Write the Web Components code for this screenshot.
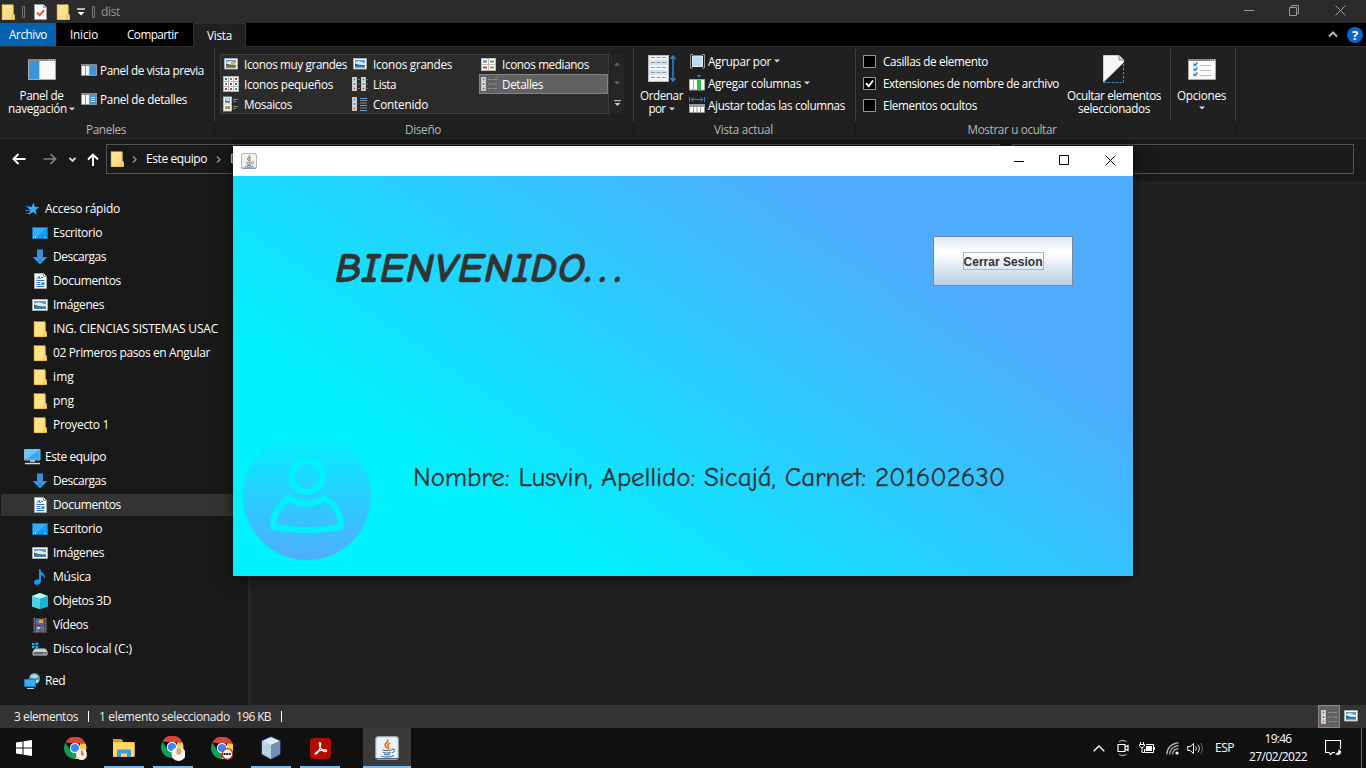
<!DOCTYPE html>
<html lang="es">
<head>
<meta charset="utf-8">
<title>dist</title>
<style>
html,body{margin:0;height:100%;overflow:hidden;background:#101010}
body{font:11.7px/16px "Open Sans","Noto Sans",sans-serif;color:#fff}
</style>
</head>
<body>
<desktop-screen></desktop-screen>
<script>
const folder='<g transform="translate(1)"><path d="M1 .5h9.500l2 1V10l1 .8v4.700H1z" fill="#ffe18b"/><path d="M1.300.5v15M1 15.500h12" stroke="#f0c346" fill="none"/><path d="M10.800 15.500v-4.500l1-1.500v-9h-1" fill="none" stroke="#eec95c" stroke-width=".8"/><path d="M11.300 15.500v-4.500h2.200v4.500z" fill="#ffe18b" stroke="#e8b839" stroke-width=".8"/></g>';
const scene=(x,y,w,h)=>`<g transform="translate(${x} ${y}) scale(${w/10} ${h/7})"><path fill="#4f9be8" d="M0 0h10v7H0z"/><path fill="#dceefa" d="M0 2l4-1 6 2v2H0z"/><path fill="#2b6b55" d="M0 3l4 1.500 6 .3V6H0z"/><path fill="#3c80b8" d="M0 5.500h10V7H0z"/></g>`;
const java='<rect x=".7" y=".7" width="22.600" height="22.600" rx="2.500" fill="#f0f3f6" stroke="#8fa5b8" stroke-width="1.200"/><path d="M1 22.500h22" stroke="#496b86"/><path d="M12.500 3.500c2 2-3.500 4-2.500 6 .4 1.200 2 1.400 1.500 3M15 7c-3 1.300-3 2.300-1.500 3.700.8 1-.3 1.800-1 2.300" fill="none" stroke="#e76f00" stroke-width="1.600"/><path d="M7.500 13.800c2 1.200 7 1.200 9 0M8 16.200c2 1.100 6 1.100 8 0M9 18.300c2 .8 4 .8 6 0M6 20c3 1.500 9 1.500 13-.3M16.800 13.300c4-.8 3 2.700 0 3.700" fill="none" stroke="#5382a1" stroke-width="1.300"/>';
const chrome='<path fill="#db4437" d="M1.500 5.500A11 11 0 0 1 21.500 6.500H11z"/><path fill="#ffcd40" d="M21.500 6.500A11 11 0 0 1 10.500 22L16 13V6.500z"/><path fill="#0f9d58" d="M1.500 5.500A11 11 0 0 0 10.500 22l4.500-7.500L6 13z"/><circle cx="11" cy="11" r="5.200" fill="#fff"/><circle cx="11" cy="11" r="4.100" fill="#4285f4"/>';
const mini=(x,y,w,h,c)=>`<path d="M${x} ${y}h${w}v${h}h-${w}z" fill="#fff"/><path d="M${x+w/2-1} ${y+h/2-1}h2v2h-2z" fill="${c}"/>`;
const col=(x)=>`<path d="M${x} 1h5v14h-5z" fill="#b5b5b5"/>`+mini(x+.7,1.7,3.6,3.5,'#3b8080')+mini(x+.7,6.2,3.6,3.5,'#3678c0')+mini(x+.7,10.700,3.6,3.5,'#d33b28');
const det=col(0)+'<path d="M7 3.500h4m1 0h4M7 8h4m1 0h4M7 12.500h4m1 0h4" stroke="#8b8b8b"/>';
const I={
folder:[16,16,folder],
grip:[3,12,'<path d="M.5.500h2v11h-2z" fill="none" stroke="#7a7a7a" stroke-width=".9"/>'],
check:[13,16,'<path d="M.5.500h9l3 3v12H.5z" fill="#fafafa" stroke="#999"/><path d="M9.500.500v3h3" fill="#ddd" stroke="#999"/><path d="M3 8.500l2.700 2.700 4.500-5" fill="none" stroke="#e8501e" stroke-width="1.800"/>'],
qat:[8,8,'<path d="M0 1h8" stroke="#fff" stroke-width="1.300"/><path d="M.5 4h7L4 7.500z" fill="#fff"/>'],
caret:[6,4,'<path d="M0 .5h6L3 3.500z" fill="#d8d8d8"/>'],
min:[10,10,'<path d="M0 5.500h10" stroke="currentColor"/>'],
max:[11,11,'<path d="M.5.500h9v9h-9z" fill="none" stroke="currentColor"/>'],
restore:[11,11,'<path d="M.5 2.500h7v8h-7zM2.500 2.500v-2h7v8h-2" fill="none" stroke="currentColor"/>'],
close:[11,11,'<path d="M.5.500l10 10M10.500.500l-10 10" fill="none" stroke="currentColor"/>'],
chevup:[10,7,'<path d="M1 5.500l4-4 4 4" fill="none" stroke="#b5b5b5" stroke-width="2"/>'],
navpane:[28,21,'<path d="M.5.500h27v20H.5z" fill="#f8f8f8" stroke="#aaa"/><path d="M0 0h28v2H0z" fill="#888"/><path d="M21 1h1m1 0h1m1 0h1" stroke="#ddd"/><path d="M1 2h10v18H1z" fill="#3a94de"/><path d="M11.500 2v18" stroke="#ccc"/>'],
prev:[16,12,'<path d="M.5.500h15v11H.5z" fill="#f6f6f6" stroke="#999"/><path d="M0 0h16v2H0z" fill="#888"/><path d="M9 2h6v9H9z" fill="#3a94de"/><path d="M4.500 2v9M8.500 2v9" stroke="#999"/>'],
detp:[16,12,'<path d="M.5.500h15v11H.5z" fill="#f6f6f6" stroke="#999"/><path d="M0 0h16v2H0z" fill="#888"/><path d="M9 2h6v9H9z" fill="#3a94de"/><path d="M4.500 2v9M8.500 2v9" stroke="#999"/><path d="M10 4.500h4m-4 2h4m-4 2h4" stroke="#cfe6fa"/>'],
xl:[14,12,'<path d="M.5.500h13v10.500H.5z" fill="#fff" stroke="#aaa"/>'+scene(2,2,10,7.500)+'<path d="M7 3.500h4v4H7z" fill="#e8b421"/><path d="M3 6.500h3v3H3z" fill="#d5442e"/><path d="M7 7h3v2.500H7z" fill="#2f8c30"/>'],
lg:[14,12,'<path d="M.5.500h13v10.500H.5z" fill="#fff" stroke="#aaa"/>'+scene(2,2,10,7.500)],
md:[16,13,'<path d="M0 0h15v13H0z" fill="#bbb"/><path d="M1 1h6v5H1zM8 1h6v5H8zM1 7h6v5H1zM8 7h6v5H8z" fill="#fff"/><path d="M2 2.500h4v2H2z" fill="#4488b8"/><path d="M9 2.500h4v2H9z" fill="#6b9f43"/><path d="M2 8.500h4v2H2z" fill="#c83a28"/><path d="M9 8.500h4v2H9z" fill="#bb922d"/>'],
sm:[16,16,'<path d="M0 0h16v16H0z" fill="#b5b5b5"/>'+[1,6,11].map((x,i)=>[1,6,11].map((y,j)=>mini(x,y,4,4,['#3c7395','#5a9245','#b8372c'][(i+j)%3])).join('')).join('')],
list:[16,16,col(0)+col(9)+'<path d="M6 3.500h2M6 8h2M6 12.500h2M15 3.500h1M15 8h1M15 12.500h1" stroke="#888"/>'],
details:[16,16,det],
tiles:[16,16,'<path d="M0 .5h9v15H0z" fill="#b8b8b8"/><path d="M1 1.500h7v6H1zM1 8.500h7v6H1z" fill="#fff"/>'+scene(2,2.500,5,4)+'<path d="M2 10h2.500v3H2z" fill="#d88a34"/><path d="M4.500 10H7v3H4.500z" fill="#5aa23a"/><path d="M10 3.500h5M10 5.500h3M10 10.500h5M10 12.500h3" stroke="#888"/>'],
content:[16,16,col(0)+'<path d="M8 2.500h7M8 9.500h7M8 14.500h7" stroke="#5aa0f0"/><path d="M8 4.500h7M8 7h7M8 12h7" stroke="#888"/>'],
aup:[6,4,'<path d="M0 3.500h6L3 .5z" fill="#666"/>'],adn:[6,4,'<path d="M0 .5h6L3 3.500z" fill="#666"/>'],
amore:[7,7,'<path d="M0 .7h7" stroke="#ccc"/><path d="M.5 3h6L3.500 6z" fill="#ccc"/>'],
sort:[28,28,'<path d="M0 0h21v27H0z" fill="#f5f5f5"/><path d="M0 5h21v5H0zM0 15h21v5H0z" fill="#cde6f5"/><path d="M3 2.500h15M3 7.500h15M3 12.500h15M3 17.500h15M3 22.500h15" stroke="#999" stroke-dasharray="4 1.500"/><path d="M.5.500h20v26H.5z" fill="none" stroke="#bbb"/><path d="M25 1v25M22.500 4L25 1l2.500 3M22.500 23l2.500 3 2.500-3" fill="none" stroke="#2a86d6" stroke-width="1.500"/>'],
group:[15,15,'<path d="M3 .5H.5v13.500H3M12 .5h2.500v13.500H12" fill="none" stroke="#999"/><path d="M2.500 2h10v10.500h-10z" fill="#b3dcfb" stroke="#eee"/>'],
addc:[16,16,'<path d="M7.500 0h5L10 2.500z" fill="#2a86d6"/><path d="M.5 4.500h15v10.500H.5z" fill="#fff" stroke="#aaa"/><path d="M8 5h4v10H8z" fill="#27c13b"/><path d="M4.500 5v10" stroke="#aaa"/>'],
fitc:[16,16,'<path d="M.5 0v5M15.500 0v5M2 2.500h12M4.500.500l-2.500 2 2.500 2M11.500.500l2.500 2-2.500 2" fill="none" stroke="#2a86d6"/><path d="M.5 7.500h15v8H.5z" fill="#fff" stroke="#999"/><path d="M0 7h16v3H0z" fill="#999"/><path d="M4.500 9v6M8 9v6M11.500 9v6" stroke="#999"/>'],
tick:[13,13,'<path d="M.5.500h12v12H.5z" fill="#000" stroke="#999"/><path d="M3 6.200l2.700 3L10 3.500" fill="none" stroke="#fff" stroke-width="1.900"/>'],
box:[13,13,'<path d="M.5.500h12v12H.5z" fill="#000" stroke="#999"/>'],
hide:[22,28,'<path d="M.5 27V.5h15.500l4.500 4.500v2.500z" fill="#f6f6f6" stroke="#ccc"/><path d="M16 .5V5h4.500" fill="#ddd" stroke="#888"/><path d="M20.500 9v18.500H1" fill="none" stroke="#3796e2" stroke-dasharray="2.500 1.500"/>'],
opts:[28,21,'<path d="M.5.500h27v20H.5z" fill="#fafafa" stroke="#aaa"/><path d="M0 0h28v2H0z" fill="#80878c"/><path d="M22 1h1m1 0h1m1 0h1" stroke="#ddd"/><path d="M5 3.500h4v4H5zM5 8.500h4v4H5zM5 13.500h4v4H5z" fill="#ddd"/><path d="M5.500 5l1.500 1.500L9.500 3.500M5.500 10L7 11.500l2.500-3M5.500 15L7 16.500l2.500-3" fill="none" stroke="#2a86d6" stroke-width="1.400"/><path d="M12 6.500h11M12 11.500h11M12 16.500h11" stroke="#bbb"/>'],
back:[14,12,'<path d="M13.500 6H1.500M6.500 1L1.500 6l5 5" fill="none" stroke="currentColor" stroke-width="1.900"/>'],
fwd:[14,12,'<path d="M.5 6h12M7.500 1l5 5-5 5" fill="none" stroke="#858585" stroke-width="1.700"/>'],
dn:[7,5,'<path d="M.5.800l3 3 3-3" fill="none" stroke="#ddd" stroke-width="1.900"/>'],
up:[12,13,'<path d="M6 13V1.500M1 6.500l5-5 5 5" fill="none" stroke="#fff" stroke-width="1.900"/>'],
rt:[5,7,'<path d="M1 .5l3 3-3 3" fill="none" stroke="#999" stroke-width="1.300"/>'],
star:[16,16,'<path d="M9.500 1.500l1.200 4.200 4.800.5-4 2.800 1.300 4.800-3.800-2.700-4.300 2.900 1.600-4.700L3 6l4.500-.1z" fill="#37a9f5"/><path d="M2 5.500h4M1 9.500h5M2 12.500h3" stroke="#1a75b8"/>'],
desk:[16,12,'<path d="M.5.500h15v11H.5z" fill="#0d9cf8" stroke="#0670ba"/><path d="M1 1h14L4 10H1z" fill="#38acf8"/><path d="M1 10.500h1m1 0h1m9 0h1" stroke="#fff"/>'],
down:[16,16,'<path d="M5 .5h6V8h4.500L8 15.500.5 8H5z" fill="#3a8ee0"/>'],
doc:[13,16,'<path d="M.5.500h9l3 3v12H.5z" fill="#fafafa" stroke="#a5a5a5"/><path d="M9.500.500v3h3" fill="#ddd" stroke="#999"/><path d="M3 6l2-3 1 3M7 4.500h2M2.500 7.500h8M2.500 9.500h4M2.500 11.500h4M2.500 13.500h8" stroke="#257fc0" fill="none"/><path d="M7.500 9.500h3v2.500h-3z" fill="#387"/>'],
img:[16,12,'<path d="M.5.500h15v11H.5z" fill="#fff" stroke="#aaa"/>'+scene(2,2,12,8)],
pc:[17,16,'<path d="M.5.500h15.500v10.500H.5z" fill="#2da9f7" stroke="#8bb9d6"/><path d="M1 1h14L3 10H1z" fill="#6cc6fb"/><path d="M6 12h5M1 14.500h15" stroke="#ccd8e0" stroke-width="1.500"/>'],
music:[16,16,'<path d="M8.200 0c.3 4 5.800 4.500 4.600 9.500-.6-2-2.300-3-3.800-3.300V12c0 4.500-7 5-7 1.500 0-2.500 2.700-3.600 5-2.700V0z" fill="#0d9cf8"/>'],
cube:[16,16,'<path d="M0 3l8-3v16l-8-2.500z" fill="#73e5f2"/><path d="M8 0l8 3v10.500L8 16z" fill="#1098c8"/><path d="M0 3l8-3 8 3-8 3z" fill="#b3f4f6"/><path d="M8 6l8-3v10.500L8 16z" fill="#17b2d3"/><path d="M8 6v10l-8-2.500V3z" fill="#4fd0e2"/>'],
film:[14,15,'<path d="M0 0h14v15H0z" fill="#444"/><path d="M1.500 0v15M12.500 0v15" stroke="#999" stroke-dasharray="1 1.500"/><path d="M3 1h8v6H3zM3 8h8v6H3z" fill="#4779c8"/><path d="M6 2h4v3H6z" fill="#e5a52d"/><path d="M3 5h5v2H3zM6 11h4v3H6z" fill="#a64838"/><path d="M4 9h3v2H4z" fill="#e8c93a"/>'],
disk:[16,14,'<path d="M3 6.500h10l2.500 2.500H1z" fill="#ccc"/><path d="M1 9.500h14V13H1z" fill="#5e6468" stroke="#ccc"/><path d="M11 11.500h2" stroke="#4cf060"/><path d="M0 1h2.500v2.200H0zM3.500.500h2.700v2.700H3.500zM0 4h2.500v2.200H0zM3.500 4h2.700v2.500H3.500z" fill="#15b2ee"/>'],
net:[17,16,'<circle cx="10.500" cy="5.500" r="5.500" fill="#5897b5"/><path d="M6 4c3-4 7-3 8 0-3 2-5 1-8 0zM8 8c4-2 6-1 7 0-2 3-5 3-7 0z" fill="#b4dce6"/><path d="M.5 6.500h11v7H.5z" fill="#3aaef5" stroke="#1a7dbd"/><path d="M3 15.500h7" stroke="#ccd"/>'],
java:[24,24,java],
chromeA:[23,23,chrome+'<circle cx="17.500" cy="17.500" r="5.500" fill="#f5f0e8"/><path d="M17 13c3 1 2 3 3 6l-3-1z" fill="#b98a55"/>'],
chromeB:[24,25,chrome+'<circle cx="17.500" cy="18" r="7" fill="#faf7f2"/><path d="M15.500 13c2-3 5-1 5 2l-1 4-4-1z" fill="#d3a981"/>'],
chromeC:[22,23,chrome+'<circle cx="16.500" cy="17" r="5.300" fill="#fff" stroke="#c0282c" stroke-width="1.200"/><path d="M12.500 17h8" stroke="#222" stroke-width="2.200" stroke-dasharray="2 .6"/>'],
win:[16,16,'<path d="M0 2.500L6.500 1.500v6H0zM7.500 1.300L16 0v7.500H7.500zM0 8.500h6.500v6L0 13.500zM7.500 8.500H16V16l-8.500-1.300z" fill="#fff"/>'],
files:[22,19,'<path d="M0 1h8l2 2h11.500v15H0z" fill="#f7c64c"/><path d="M0 0h8l2 2v1H0z" fill="#e09b1b"/><path d="M0 4h21.500v13H0z" fill="#ffd869"/><path d="M4 18v-6c0-1 .6-1.500 1.500-1.500h11c1 0 1.500.6 1.500 1.500v6h-4v-3.500H8V18z" fill="#3f9bdd"/>'],
nb:[24,24,'<path d="M12 1l9 4v13l-9 5-9-5V5z" fill="#8cabc4" stroke="#2b3f90" stroke-width="1.500"/><path d="M3 5l9-4 9 4-9 4z" fill="#dcecf1"/><path d="M3 5l9 4v14l-9-5z" fill="#b9d3e2"/><path d="M12 9l9-4v13l-9 5z" fill="#6f91b4"/>'],
pdf:[21,21,'<rect width="21" height="21" rx="3.500" fill="#b30b00"/><path d="M9.800 4.500c1.500 0 1 3.500-.2 6.500-1 2.500-2.500 5-4 5.200-1.500-.3.500-2.500 4-3.600s6.500-1 7 .2c.3 1.500-3 1-5-1.300S8.500 4.800 9.800 4.500z" fill="none" stroke="#fff" stroke-width="1.200"/>'],
tup:[12,7,'<path d="M.7 6.300L6 1l5.300 5.300" fill="none" stroke="#fff" stroke-width="1.300"/>'],
cam:[12,16,'<path d="M2 1.500c2.500-1.300 5-1.300 7.500 0M2 14.500c2.500 1.300 5 1.300 7.500 0" fill="none" stroke="#ccc"/><path d="M1 4.500h7v7H1zM8 7l3-1.500v5L8 9" fill="none" stroke="#fff" stroke-width="1.200"/>'],
bat:[16,12,'<path d="M1.500 0v2M4.500 0v2M.5 2.500h5v1.500L3 6 .5 4zM3 6v4.500h2" fill="none" stroke="#fff"/><path d="M7 2.500h7.500v8h-9V7" fill="none" stroke="#fff"/><path d="M7 4h6v5H6.500z" fill="#fff"/><path d="M15.500 5v3" stroke="#fff"/>'],
wifi:[13,13,'<path d="M.7 12.500C1 6 6 1 12.500.800M3.500 12.500c.3-5 4-8.500 9-8.800M6.500 12.500c.3-3.500 2.500-5.500 6-5.800" fill="none" stroke="#bbb" stroke-width="1.200"/><circle cx="11" cy="11" r="1.600" fill="#fff"/>'],
vol:[17,13,'<path d="M.7 4.500h2.500L6.500 1.500v10L3.200 8.500H.7z" fill="none" stroke="#fff"/><path d="M8.500 4.500c1 1.300 1 2.700 0 4M10.800 2.700c2 2.500 2 5 0 7.600" fill="none" stroke="#fff"/><path d="M13.500 1c2.500 3.500 2.500 7.500 0 11" fill="none" stroke="#666"/>'],
note:[17,16,'<path d="M10 12.500H7.500L5.500 14.500 4 12.500H.5V.5h15V9" fill="none" stroke="#fff" stroke-width="1.200"/><path d="M13.500 9c.3 3-1 4.500-3.700 5 3 2.300 6.700.5 6.400-2.500z" fill="#fff"/>'],
user:[128,128,'<defs><linearGradient id="u" x2="0" y2="1"><stop offset="0" stop-color="#00f2fe"/><stop offset="1" stop-color="#4facfe"/></linearGradient></defs><circle cx="64" cy="64" r="64" fill="url(#u)"/><g fill="none" stroke="#00f2fe" stroke-width="6"><circle cx="64" cy="44.500" r="15.500"/><path d="M46 66q17 11.500 36 0c11 7 16 18 16 29q-34 6.500-68 0c0-11 5-22 16-29z" stroke-linejoin="round"/></g>']
};
function def(name,css,html,after){
  customElements.define(name,class extends HTMLElement{
    constructor(){super();this.attachShadow({mode:'open'})}
    connectedCallback(){
      const a=n=>this.getAttribute(n)||'';
      this.shadowRoot.innerHTML=`<style>:host{display:block;box-sizing:border-box}${css}</style>${typeof html==='function'?html(a,this):html}`;
      if(after)after(this,a);
    }
  });
}
def('ui-icon',':host{display:inline-block;flex:none;line-height:0}svg{display:block}',a=>{const i=I[a('name')];const w=+a('w')||i[0],h=w*i[1]/i[0];return `<svg width="${w}" height="${h}" viewBox="0 0 ${i[0]} ${i[1]}">${i[2]}</svg>`});
def('rb-big',':host{display:flex;flex-direction:column;align-items:center;line-height:13px;flex:none}.i{height:28px;display:flex;align-items:center;margin-bottom:6px}',a=>`<div class="i"><ui-icon name="${a('icon')}"></ui-icon></div><slot></slot>`);
def('rb-small',':host{display:flex;align-items:center;gap:3px;height:20px}.i{width:16px;display:flex;justify-content:center;flex:none}',a=>`<span class="i"><ui-icon name="${a('icon')}"></ui-icon></span><ui-text w="${a('w')}">${a('text')}</ui-text>${a('drop')?'<ui-icon name="caret"></ui-icon>':''}`);
def('rb-check',':host{display:flex;align-items:center;gap:7px;height:22px}',a=>`<ui-icon name="${a('icon')}"></ui-icon><ui-text w="${a('w')}">${a('text')}</ui-text>`);
def('rb-view',':host{display:flex;align-items:center;height:20px;padding-left:1px;border:1px solid transparent}:host([on]){background:#626262;border-color:#838383}.i{width:16px;margin-right:5px;display:flex;justify-content:center}',a=>`<span class="i"><ui-icon name="${a('icon')}"></ui-icon></span><ui-text w="${a('w')}">${a('text')}</ui-text>`);
def('rb-group',':host{display:flex;flex-direction:column;height:92px;flex:none;background:linear-gradient(#404040 72px,#181818 72px) right 2px/1px 85px no-repeat}.b{height:74px;display:flex;box-sizing:border-box}.l{text-align:center;color:#b8b8b8;line-height:16px;padding-right:3px}',a=>`<div class="b"><slot></slot></div><div class="l">${a('label')?`<ui-text w="${a('lw')}">${a('label')}</ui-text>`:''}</div>`,(h,a)=>h.style.width=a('width')+'px');
def('title-bar',':host{display:flex;align-items:center;height:23px;background:#2b2b2b;color:#999}.l{display:flex;align-items:center;flex:1}.r{display:flex;gap:35px;padding-right:20px;margin-top:-3px;align-items:center}ui-text{font-size:12px}',
`<div class="l"><ui-icon name="folder"></ui-icon><ui-icon name="grip" style="margin:0 9px 0 6px"></ui-icon><ui-icon name="check"></ui-icon><ui-icon name="folder" style="margin:0 6px 0 8px"></ui-icon><ui-icon name="qat"></ui-icon><ui-icon name="grip" style="margin:0 6px 0 7px"></ui-icon><ui-text w="19">dist</ui-text></div><div class="r"><ui-icon name="min"></ui-icon><ui-icon name="restore"></ui-icon><ui-icon name="close"></ui-icon></div>`);
def('tab-strip',':host{display:flex;height:23px;background:#000;text-align:center;line-height:23px}.f{width:56px;background:#0063b1}.a{width:56px}.c{width:81px}.v{width:53px;height:24px;position:relative;box-sizing:border-box;background:#202020;border:1px solid #303030;border-bottom:0;line-height:22px}.r{margin-left:auto;display:flex;align-items:center;gap:9px;padding-right:3px}.q{width:16px;height:16px;border-radius:50%;background:#0a66c8;line-height:16px;font-weight:700;font-size:13px}',
`<div class="f"><ui-text w="38">Archivo</ui-text></div><div class="a"><ui-text w="28">Inicio</ui-text></div><div class="c"><ui-text w="51">Compartir</ui-text></div><div class="v"><ui-text w="25">Vista</ui-text></div><div class="r"><ui-icon name="chevup"></ui-icon><div class="q">?</div></div>`);
def('ribbon-bar',`:host{display:flex;height:93px;background:#202020;border-bottom:1px solid #2c2c2c;border-top:1px solid #303030}
.gal{margin:7px 0 0 5px;width:389px;height:60px;box-sizing:border-box;background:#2b2b2b;outline:1px solid #3c3c3c;outline-offset:-1px;display:grid;grid-template-columns:repeat(3,129px);grid-auto-rows:20px;padding-left:1px}
.sc{display:flex;flex-direction:column;width:14px;height:60px;margin:7px 0 0 1px;background:#252525;align-items:center;justify-content:space-around}
.two{display:flex;flex-direction:column;margin:13px 0 0 6px;gap:9px}.three{display:flex;flex-direction:column;margin:4px 0 0 6px;gap:2px}.chk{margin:3px 0 0 7px;width:196px}.d{display:flex;align-items:center;gap:5px}rb-big{margin-top:8px}`,
`<rb-group width="215" label="Paneles" lw="40"><rb-big icon="navpane" style="margin-left:8px;width:67px"><ui-text w="44">Panel de</ui-text><span class="d" style="gap:2px"><ui-text w="59">navegación</ui-text><ui-icon name="caret"></ui-icon></span></rb-big>
<div class="two"><rb-small icon="prev" text="Panel de vista previa" w="104"></rb-small><rb-small icon="detp" text="Panel de detalles" w="87"></rb-small></div></rb-group>
<rb-group width="419" label="Diseño" lw="36"><div class="gal">
<rb-view icon="xl" text="Iconos muy grandes" w="103"></rb-view><rb-view icon="lg" text="Iconos grandes" w="79"></rb-view><rb-view icon="md" text="Iconos medianos" w="87"></rb-view>
<rb-view icon="sm" text="Iconos pequeños" w="89"></rb-view><rb-view icon="list" text="Lista" w="23"></rb-view><rb-view on icon="details" text="Detalles" w="41"></rb-view>
<rb-view icon="tiles" text="Mosaicos" w="48"></rb-view><rb-view icon="content" text="Contenido" w="55"></rb-view></div><div class="sc"><ui-icon name="aup"></ui-icon><ui-icon name="adn"></ui-icon><ui-icon name="amore"></ui-icon></div></rb-group>
<rb-group width="222" label="Vista actual" lw="59"><rb-big icon="sort" style="width:43px;margin-left:6px"><ui-text w="43">Ordenar</ui-text><span class="d" style="gap:3px"><ui-text w="17">por</ui-text><ui-icon name="caret"></ui-icon></span></rb-big>
<div class="three"><rb-small icon="group" text="Agrupar por" w="63" drop="1"></rb-small><rb-small icon="addc" text="Agregar columnas" w="93" drop="1"></rb-small><rb-small icon="fitc" text="Ajustar todas las columnas" w="137"></rb-small></div></rb-group>
<rb-group width="315" label="Mostrar u ocultar" lw="89"><div class="chk"><rb-check icon="box" text="Casillas de elemento" w="105"></rb-check><rb-check icon="tick" text="Extensiones de nombre de archivo" w="176"></rb-check><rb-check icon="box" text="Elementos ocultos" w="94"></rb-check></div>
<rb-big icon="hide" style="width:94px;margin-left:8px"><ui-text w="94">Ocultar elementos</ui-text><ui-text w="72">seleccionados</ui-text></rb-big></rb-group>
<rb-group width="65"><rb-big icon="opts" style="width:61px"><ui-text w="49">Opciones</ui-text><ui-icon name="caret" style="margin-top:4px"></ui-icon></rb-big></rb-group>`);
def('address-row',':host{display:flex;height:42px;background:#191919;padding:5px 12px 0;align-items:flex-start}.n{display:flex;align-items:center;height:30px;width:94px}.p,.s{height:30px;border:1px solid #535353;box-sizing:border-box;display:flex;align-items:center}.p{width:894px;padding-left:2px;margin-right:12px}.s{flex:1}ui-text{font-size:12px}',
`<div class="n"><ui-icon name="back"></ui-icon><ui-icon name="fwd" style="margin:0 12px 0 17px"></ui-icon><ui-icon name="dn"></ui-icon><ui-icon name="up" style="margin-left:11px"></ui-icon></div><div class="p"><ui-icon name="folder"></ui-icon><ui-icon name="rt" style="margin:0 9px 0 7px"></ui-icon><ui-text w="61">Este equipo</ui-text><ui-icon name="rt" style="margin:0 9px"></ui-icon><ui-text w="58">Documentos</ui-text></div><div class="s"></div>`);
def('tree-item',':host{display:flex;align-items:center;height:24px;padding-left:32px}:host([root]){padding-left:24px}:host([on]){background:#333;margin:1px 0 1px 1px;height:22px;padding-left:31px}.i{width:16px;margin-right:5px;display:flex;justify-content:center;flex:none}ui-text{font-size:12px}',a=>`<span class="i"><ui-icon name="${a('icon')}"></ui-icon></span><ui-text w="${a('w')}">${a('text')}</ui-text>`);
const tree=[['star','Acceso rápido',75,1],['desk','Escritorio',49],['down','Descargas',53],['doc','Documentos',68],['img','Imágenes',51],['folder','ING. CIENCIAS SISTEMAS USAC',165],['folder','02 Primeros pasos en Angular',157],['folder','img',21],['folder','png',21],['folder','Proyecto 1',56],['pc','Este equipo',61,1],['down','Descargas',53],['doc','Documentos',68,0,1],['desk','Escritorio',49],['img','Imágenes',51],['music','Música',38],['cube','Objetos 3D',58],['film','Vídeos',35],['disk','Disco local (C:)',79],['net','Red',20,1]];
def('nav-tree',':host{width:250px;background:#191919;border-right:2px solid #292929;padding-top:16px;flex:none}tree-item[root]:not(:first-of-type){margin-top:8px}',()=>tree.map(([i,t,w,r,o])=>`<tree-item icon="${i}" text="${t}" w="${w}"${r?' root':''}${o?' on':''}></tree-item>`).join(''));
def('status-bar',':host{display:flex;align-items:center;height:23px;background:#333;padding:0 8px 0 14px;color:#eee}i{width:1px;height:11px;background:#fff;margin:0 10px}ui-text{font-size:12px}.m{margin-left:auto;width:22px;height:23px;box-sizing:border-box;border:1px solid #888;background:#626262;display:flex;align-items:center;justify-content:center;margin-right:4px}ui-icon[name=lg]{margin-top:-1px}',
`<ui-text w="64">3 elementos</ui-text><i></i><ui-text w="131">1 elemento seleccionado</ui-text><ui-text w="35" style="margin-left:6px">196 KB</ui-text><i></i><span class="m"><ui-icon name="details"></ui-icon></span><ui-icon name="lg"></ui-icon>`);
def('task-button',':host{display:flex;align-items:center;justify-content:center;width:40px;height:40px;flex:none;box-sizing:border-box}:host([open]){border-bottom:2px solid #76b9ed;padding-top:2px}:host([active]){width:48px;background:#3a3a3a}',a=>`<ui-icon name="${a('icon')}"></ui-icon>`);
def('task-bar',':host{display:flex;height:40px;background:#101010;align-items:center}.a{display:flex;flex:1;gap:9px;padding-left:4px}.t{display:flex;align-items:center;height:40px}.c{font-size:12px;text-align:center;width:58px;line-height:18px;margin:0 18px 0 15px}.e{width:1px;height:40px;background:#666;margin:0 4px 0 19px}ui-text{font-size:12px}',
`<div class="a"><task-button icon="win"></task-button><task-button icon="chromeA" style="margin-left:2px"></task-button><task-button icon="files" open></task-button><task-button icon="chromeB" open></task-button><task-button icon="chromeC"></task-button><task-button icon="nb" open></task-button><task-button icon="pdf" open></task-button><task-button icon="java" open active style="margin-left:14px"></task-button></div><div class="t"><ui-icon name="tup"></ui-icon><ui-icon name="cam" style="margin:0 10px 0 12px"></ui-icon><ui-icon name="bat"></ui-icon><ui-icon name="wifi" style="margin:0 8px 0 11px"></ui-icon><ui-icon name="vol"></ui-icon><ui-text w="19" style="margin-left:11px">ESP</ui-text><div class="c"><ui-text w="27">19:46</ui-text><br><ui-text w="58">27/02/2022</ui-text></div><ui-icon name="note"></ui-icon><span class="e"></span></div>`);
def('java-button',':host{width:140px;height:50px;border:1px solid #7a8a99;background:linear-gradient(#dde8f3,#fff 30%,#fff 33%,#b8cfe5);display:flex;align-items:center;justify-content:center;color:#333;font:700 12px/18px "Liberation Sans",sans-serif}span{border:1px solid #a3b8cc;height:16px;display:block}','<span><ui-text w="79"><slot></slot></ui-text></span>');
def('java-window',`:host{position:absolute;left:233px;top:146px;width:900px;height:430px;box-shadow:0 2px 14px rgba(0,0,0,.55);display:flex;flex-direction:column}
.t{height:30px;flex:none;background:#fff;color:#000;display:flex;align-items:center;padding:0 17px 1px 8px;box-sizing:border-box}.t ui-icon[name=min]{margin-left:auto}
.b{flex:1;background:linear-gradient(34deg,#00f2fe 23%,#4facfe 77%);display:grid;grid-template-rows:258px 1fr;color:#333;font-family:"Comic Sans MS","Comic Neue",Inter,sans-serif}
.h{display:flex;justify-content:space-between;padding:60px 60px 0 102px}.h ui-text{font:italic 700 43px/64px "Comic Sans MS","Comic Neue",Inter,sans-serif;-webkit-text-stroke:.5px #333}.h span{letter-spacing:7.500px}.d{display:flex;padding:0 0 0 10px}.d ui-text{font-size:27px;line-height:30px;margin:29px 0 0 42px;-webkit-text-stroke:.3px #333}.d ui-icon{margin-top:-2px}`,
`<div class="t"><ui-icon name="java" w="16"></ui-icon><ui-icon name="min"></ui-icon><ui-icon name="max" style="margin:0 35px"></ui-icon><ui-icon name="close"></ui-icon></div><div class="b"><div class="h"><ui-text w="295" n="10">BIENVENIDO<span>...</span></ui-text><java-button>Cerrar Sesion</java-button></div><div class="d"><ui-icon name="user"></ui-icon><ui-text w="592">Nombre: Lusvin, Apellido: Sicajá, Carnet: 201602630</ui-text></div></div>`);
def('desktop-screen',':host{width:1366px;height:768px;overflow:hidden;display:flex;flex-direction:column;position:relative}.m{display:flex;flex:1;min-height:0;background:#202020}','<title-bar></title-bar><tab-strip></tab-strip><ribbon-bar></ribbon-bar><address-row></address-row><div class="m"><nav-tree></nav-tree></div><status-bar></status-bar><task-bar></task-bar><java-window></java-window>');
/* A single line of text whose tracking is adjusted so that it occupies the given width. */
def('ui-text',':host{display:inline-block;white-space:nowrap;flex:none}','<slot></slot>',(h,a)=>{
  const s=h.querySelector('slot');
  const t=s?s.assignedNodes().map(n=>n.textContent).join(''):h.textContent;
  const w=+a('w'),n=h.getBoundingClientRect().width;
  h.style.letterSpacing=((w-n)/(+a('n')||t.length)).toFixed(3)+'px';
  h.style.width=w+'px';
});
</script>
</body>
</html>
